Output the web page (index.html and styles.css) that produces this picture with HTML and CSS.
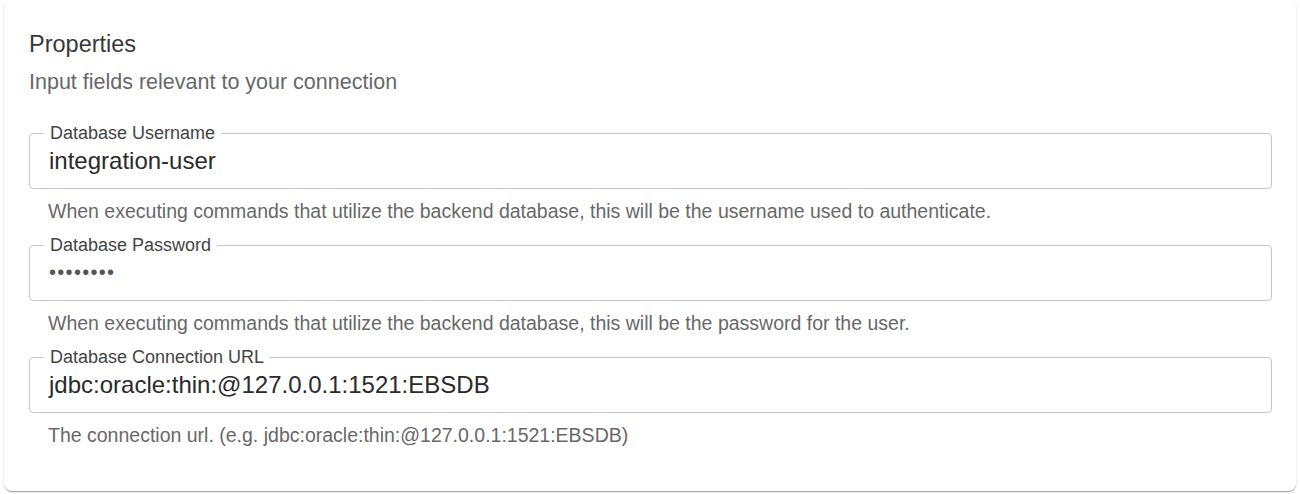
FILE: index.html
```html
<!DOCTYPE html>
<html lang="en">
<head>
<meta charset="utf-8">
<title>Properties</title>
<link rel="stylesheet" href="styles.css">
</head>
<body>
<div class="page">
  <section class="card">
    <h2 class="title">Properties</h2>
    <p class="subtitle">Input fields relevant to your connection</p>
    <div class="fields">
      <div class="field">
        <fieldset class="box">
          <legend class="label">Database Username</legend>
          <div class="value">integration-user</div>
        </fieldset>
        <p class="helper">When executing commands that utilize the backend database, this will be the username used to authenticate.</p>
      </div>
      <div class="field">
        <fieldset class="box">
          <legend class="label">Database Password</legend>
          <div class="value value-secret">••••••••</div>
        </fieldset>
        <p class="helper">When executing commands that utilize the backend database, this will be the password for the user.</p>
      </div>
      <div class="field">
        <fieldset class="box">
          <legend class="label">Database Connection URL</legend>
          <div class="value">jdbc:oracle:thin:@127.0.0.1:1521:EBSDB</div>
        </fieldset>
        <p class="helper">The connection url. (e.g. jdbc:oracle:thin:@127.0.0.1:1521:EBSDB)</p>
      </div>
    </div>
  </section>
</div>
</body>
</html>
```
FILE: styles.css
```css
html, body {
  margin: 0;
  background: #ffffff;
}
body {
  font-family: "Liberation Sans", Arial, Helvetica, sans-serif;
}
.page {
  height: 494px;
  box-sizing: border-box;
  padding: 0 4px 3px 4px;
}
.card {
  height: 491px;
  box-sizing: border-box;
  background: #ffffff;
  border-radius: 8px;
  box-shadow: 0 2px 1px -1px rgba(0,0,0,0.2), 0 1px 1px 0 rgba(0,0,0,0.14), 0 1px 3px 0 rgba(0,0,0,0.12);
  padding: 30px 24px 0 25px;
}
.title {
  margin: 0;
  font-size: 23.5px;
  font-weight: 400;
  line-height: 28px;
  color: #383838;
}
.subtitle {
  margin: 11px 0 0;
  font-size: 21.5px;
  line-height: 26px;
  color: #686868;
}
.fields {
  margin-top: 27px;
  display: flex;
  flex-direction: column;
  gap: 11px;
}
.field {
  display: flex;
  flex-direction: column;
}
.box {
  margin: 0;
  min-width: 0;
  padding: 0 20px 13px 14px;
  border: 1px solid #c6c6c6;
  border-radius: 4px;
}
.label {
  padding: 0 6px;
  font-size: 18px;
  line-height: 22px;
  color: #444444;
}
.value {
  margin-top: 2px;
  padding-left: 5px;
  font-size: 24px;
  line-height: 29px;
  color: #2a2a2a;
}
.value-secret {
  font-size: 20px;
  letter-spacing: 1.3px;
  color: #555555;
}
.helper {
  margin: 11px 0 0 19px;
  font-size: 19.5px;
  line-height: 23px;
  color: #686868;
}
```
